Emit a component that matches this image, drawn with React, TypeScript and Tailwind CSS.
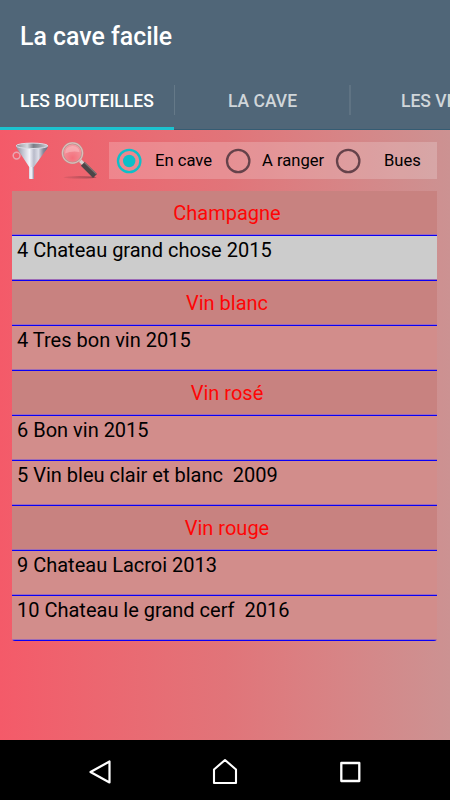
import clsx from 'clsx';

type Row = {
  label: string;
  header?: boolean;
  selected?: boolean;
};

const rows: Row[] = [
  { label: 'Champagne', header: true },
  { label: '4 Chateau grand chose 2015', selected: true },
  { label: 'Vin blanc', header: true },
  { label: '4 Tres bon vin 2015' },
  { label: 'Vin rosé', header: true },
  { label: '6 Bon vin 2015' },
  { label: '5 Vin bleu clair et blanc  2009' },
  { label: 'Vin rouge', header: true },
  { label: '9 Chateau Lacroi 2013' },
  { label: '10 Chateau le grand cerf  2016' },
];

const FunnelIcon = () => (
  <svg width="38" height="40" viewBox="0 0 38 40" className="shrink-0">
    <defs>
      <linearGradient id="cone" x1="0" x2="1">
        <stop offset="0" stopColor="#8d8d9a" />
        <stop offset="0.22" stopColor="#c4c6d2" />
        <stop offset="0.42" stopColor="#f4f5fb" />
        <stop offset="0.56" stopColor="#b9bbca" />
        <stop offset="0.7" stopColor="#dcdee8" />
        <stop offset="0.85" stopColor="#8a8a9b" />
        <stop offset="1" stopColor="#6b6a7b" />
      </linearGradient>
      <linearGradient id="rim" x1="0" x2="1">
        <stop offset="0" stopColor="#8e8e96" />
        <stop offset="0.35" stopColor="#d5d8de" />
        <stop offset="0.55" stopColor="#7a7d86" />
        <stop offset="0.8" stopColor="#a3a5ad" />
        <stop offset="1" stopColor="#cfd1d8" />
      </linearGradient>
    </defs>
    <circle cx="4.6" cy="13.6" r="3.4" fill="none" stroke="#e9a5b1" strokeWidth="1.5" />
    <path d="M4 4 Q5 7 7 9.5 L17.2 25 V36.6 Q19.5 37.6 21.8 36.6 V25 L33 9.5 Q35.5 7 36 4 Z" fill="url(#cone)" />
    <path d="M17.2 25 H21.8 V36.6 Q19.5 37.6 17.2 36.6 Z" fill="#dadbe6" />
    <path d="M19 25 V37" stroke="#f8f8fd" strokeWidth="1.3" />
    <path d="M21.3 25 V36.8" stroke="#9c8fa2" strokeWidth="1" />
    <ellipse cx="20" cy="3.8" rx="15.9" ry="2.7" fill="url(#rim)" stroke="#dcdde6" strokeWidth="1" />
  </svg>
);

const SearchIcon = () => (
  <svg width="38" height="38" viewBox="0 0 38 38" className="shrink-0">
    <defs>
      <radialGradient id="lens" cx="0.5" cy="0.75" r="0.75">
        <stop offset="0" stopColor="#f4707c" />
        <stop offset="1" stopColor="#f2a0a7" />
      </radialGradient>
      <linearGradient id="shadow" x1="0" x2="1">
        <stop offset="0" stopColor="#9f4650" stopOpacity="0.2" />
        <stop offset="1" stopColor="#783840" stopOpacity="0.7" />
      </linearGradient>
    </defs>
    <ellipse cx="20" cy="35.3" rx="16.5" ry="1.3" fill="url(#shadow)" />
    <path d="M20 18.5 L23.5 22" stroke="#d8d4d2" strokeWidth="3.4" />
    <path d="M22.8 21.8 L35 34" stroke="#4b4648" strokeWidth="5.4" />
    <path d="M24.6 20.6 L36.4 32" stroke="#7d7474" strokeWidth="1.3" />
    <circle cx="12.5" cy="11" r="9.9" fill="url(#lens)" stroke="#b9928f" strokeWidth="2.2" />
    <circle cx="12.5" cy="11" r="10.1" fill="none" stroke="#d9bfba" strokeWidth="1.2" />
    <path d="M5 11.5 Q5 4.5 12.5 4 Q19 4.5 19.5 10 Q12 8.5 5 11.5" fill="#f9bfc2" opacity="0.55" />
  </svg>
);

const Radio = ({ checked }: { checked?: boolean }) => (
  <svg width="26" height="26" viewBox="0 0 26 26" className="shrink-0">
    <circle
      cx="13.2"
      cy="13"
      r="11.2"
      fill="none"
      stroke={checked ? '#0dbfc8' : '#65424a'}
      strokeWidth="2.3"
    />
    {checked && <circle cx="13.2" cy="13" r="6.2" fill="#0dbfc8" />}
  </svg>
);

const Header = () => (
  <header className="h-[130px] overflow-hidden bg-[#506678] text-white">
    <h1 className="h-[72px] pl-5 text-[24.9px] leading-[73px] font-medium">La cave facile</h1>
    <nav className="flex h-[58px] w-[525px] border-b border-[#355c73] text-[17.5px] font-medium">
      <div className="-mb-px flex h-[58px] w-[174px] flex-col border-b-[3px] border-[#1cc2cf]">
        <span className="pl-5 leading-[58px] whitespace-nowrap">LES BOUTEILLES</span>
      </div>
      <div className="mt-[13px] h-[30px] w-px bg-[#657988]" />
      <div className="w-[174px] pl-px text-center leading-[58px] text-[#d0d6da]">LA CAVE</div>
      <div className="mt-[13px] h-[30px] w-[2px] bg-[#5f7383]" />
      <div className="pl-[50px] leading-[58px] whitespace-nowrap text-[#d0d6da]">LES VINS</div>
    </nav>
  </header>
);

const Filters = () => (
  <div className="flex h-[61px] items-start pt-3 pl-3">
    <FunnelIcon />
    <div className="w-[10px]" />
    <SearchIcon />
    <div className="ml-[11px] flex h-[37px] w-[328px] items-center bg-white/20 pl-[7px] text-[16.6px] text-black">
      <Radio checked />
      <span className="w-[83px] pt-0.5 pl-[13px]">En cave</span>
      <Radio />
      <span className="w-[84px] pt-0.5 pl-[11px] whitespace-nowrap">A ranger</span>
      <Radio />
      <span className="pt-0.5 pl-[23px]">Bues</span>
    </div>
  </div>
);

const BottleRow = ({ label, header, selected }: Row) => (
  <li
    className={clsx(
      'h-[45px] border-b border-[#0b00f5] pl-[5px] whitespace-pre shadow-[inset_0_-1px_0_#9d6bb5]',
      header && 'bg-[#c88280] text-center leading-[45px] text-[#ff0505]',
      !header && 'leading-[28px] text-black',
      !header && (selected ? 'bg-[#cccccc]' : 'bg-[#d28d8b]'),
    )}
  >
    {label}
  </li>
);

const NavBar = () => (
  <footer className="flex h-[60px] items-center justify-center gap-[99px] bg-black pt-1">
    <svg width="26" height="28" viewBox="0 0 26 28" fill="none" stroke="#fff" strokeWidth="2.2" strokeLinejoin="round">
      <path d="M3.5 14 L22.5 3.5 V24.5 Z" />
    </svg>
    <svg width="26" height="28" viewBox="0 0 26 28" fill="none" stroke="#fff" strokeWidth="2.1" strokeLinejoin="round">
      <path d="M2 25 V11.5 L13 2 L24 11.5 V25 Z" />
    </svg>
    <svg width="26" height="28" viewBox="0 0 26 28" fill="none" stroke="#fff" strokeWidth="2.3" strokeLinejoin="round">
      <path d="M4.3 5 H22.3 V23 H4.3 Z" />
    </svg>
  </footer>
);

const App = () => (
  <div className="flex h-[800px] w-[450px] flex-col overflow-hidden bg-linear-to-r from-[#f45a69] via-[#e17479] to-[#cc9292] font-[Roboto,sans-serif]">
    <Header />
    <Filters />
    <main className="flex-1 px-3 pr-[13px]">
      <ul className="overflow-hidden rounded-b-[3px] text-[20px]">
        {rows.map((row) => (
          <BottleRow key={row.label} {...row} />
        ))}
      </ul>
    </main>
    <NavBar />
  </div>
);

export default App;
